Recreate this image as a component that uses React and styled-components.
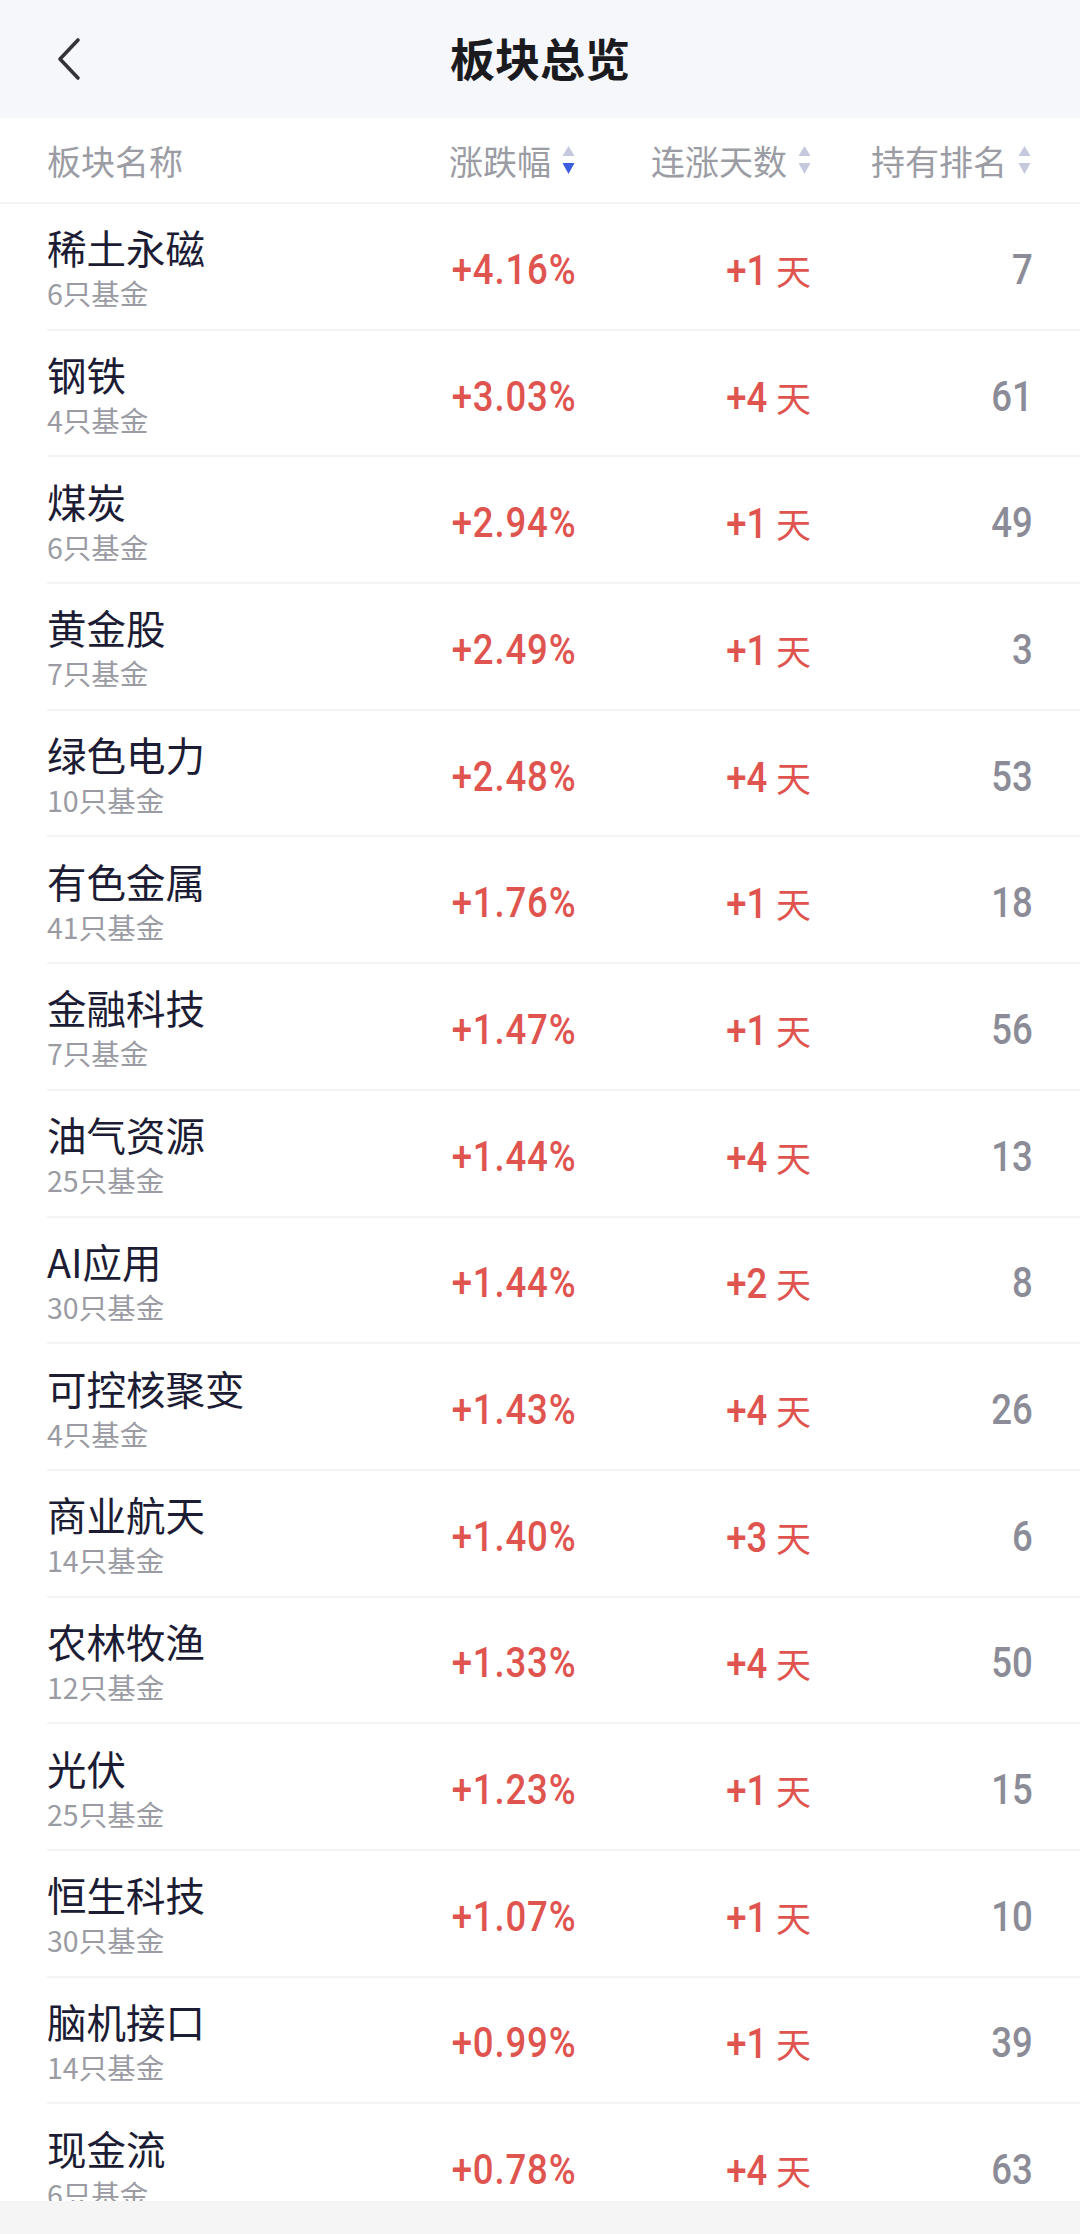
import React from 'react';
import styled, { createGlobalStyle } from 'styled-components';

const GlobalStyle = createGlobalStyle`
  html, body {
    margin: 0;
    padding: 0;
    background: #ffffff;
  }
  body {
    font-family: "Noto Sans CJK SC", "Noto Sans", sans-serif;
  }
`;

const NUM_FONT = `Roboto, "Liberation Sans", sans-serif`;

const Page = styled.div`
  width: 1080px;
  height: 100vh;
  display: flex;
  flex-direction: column;
  overflow: hidden;
  background: #fff;
`;

const TopBar = styled.header`
  height: 118px;
  flex-shrink: 0;
  background: #f6f7fa;
  display: grid;
  grid-template-columns: 118px 1fr 118px;
  align-items: center;
`;

const BackButton = styled.button`
  border: none;
  background: none;
  padding: 0 0 0 56px;
  height: 100%;
  display: flex;
  align-items: center;
  cursor: pointer;
`;

const Title = styled.h1`
  margin: 0 0 4px;
  text-align: center;
  font-size: 45px;
  font-weight: 700;
  color: #1b1b1f;
`;

const HeadRow = styled.div`
  height: 86px;
  flex-shrink: 0;
  box-sizing: border-box;
  padding: 0 47px;
  display: grid;
  grid-template-columns: 1fr 200px 236px 220px;
  align-items: center;
  border-bottom: 2px solid #f2f2f4;
`;

const HeadCell = styled.div`
  display: flex;
  align-items: center;
  justify-content: ${p => (p.$right ? 'flex-end' : 'flex-start')};
  gap: 11px;
  font-size: 34px;
  color: #9b9ca4;
  padding-right: ${p => (p.$right ? '2px' : '0')};
`;

const List = styled.div`
  flex: 1;
  overflow: hidden;
`;

const Row = styled.div`
  height: 126.7px;
  box-sizing: border-box;
  margin-left: 47px;
  padding-right: 47px;
  display: grid;
  grid-template-columns: 1fr 200px 236px 220px;
  align-items: center;
  border-bottom: 2px solid #f4f4f6;
`;

const NameBox = styled.div`
  display: flex;
  flex-direction: column;
`;

const Name = styled.div`
  font-size: 39.5px;
  line-height: 55px;
  color: #1c1d35;
`;

const Sub = styled.div`
  font-size: 28.5px;
  line-height: 40px;
  margin-top: -1px;
  color: #9a9ba3;
`;

const NumCell = styled.div`
  display: flex;
  justify-content: flex-end;
  align-items: baseline;
  gap: 9px;
  padding-top: 6px;
  padding-right: ${p => (p.$pad ? '2px' : '0')};
  color: ${p => (p.$muted ? '#8b8c97' : '#e0544f')};
`;

const Num = styled.span`
  display: inline-block;
  font-family: ${NUM_FONT};
  font-size: 42px;
  font-weight: 500;
  letter-spacing: ${p => (p.$spaced ? '1px' : '0')};
  transform: scaleX(0.87);
  transform-origin: right center;
`;

const DayUnit = styled.span`
  font-size: 35px;
`;

const BottomBar = styled.div`
  position: fixed;
  left: 0;
  right: 0;
  bottom: 0;
  height: 33px;
  background: #f5f5f6;
`;

const BackIcon = () => (
  <svg width="26" height="44" viewBox="0 0 26 44">
    <polyline
      points="22,3 4,22 22,41"
      fill="none"
      stroke="#333338"
      strokeWidth="3.6"
      strokeLinecap="round"
      strokeLinejoin="round"
    />
  </svg>
);

const SortIcon = ({ active }) => (
  <svg width="13" height="32" viewBox="0 0 13 32">
    <polygon points="6.5,2 12.5,12 0.5,12" fill="#c6c8de" />
    <polygon points="0.5,19 12.5,19 6.5,30" fill={active ? '#3c5de0' : '#c6c8de'} />
  </svg>
);

const data = [
  ['稀土永磁', 6, '+4.16%', 1, 7],
  ['钢铁', 4, '+3.03%', 4, 61],
  ['煤炭', 6, '+2.94%', 1, 49],
  ['黄金股', 7, '+2.49%', 1, 3],
  ['绿色电力', 10, '+2.48%', 4, 53],
  ['有色金属', 41, '+1.76%', 1, 18],
  ['金融科技', 7, '+1.47%', 1, 56],
  ['油气资源', 25, '+1.44%', 4, 13],
  ['AI应用', 30, '+1.44%', 2, 8],
  ['可控核聚变', 4, '+1.43%', 4, 26],
  ['商业航天', 14, '+1.40%', 3, 6],
  ['农林牧渔', 12, '+1.33%', 4, 50],
  ['光伏', 25, '+1.23%', 1, 15],
  ['恒生科技', 30, '+1.07%', 1, 10],
  ['脑机接口', 14, '+0.99%', 1, 39],
  ['现金流', 6, '+0.78%', 4, 63],
];

export default function App() {
  return (
    <Page>
      <GlobalStyle />
      <TopBar>
        <BackButton aria-label="返回">
          <BackIcon />
        </BackButton>
        <Title>板块总览</Title>
        <div />
      </TopBar>
      <HeadRow>
        <HeadCell>板块名称</HeadCell>
        <HeadCell $right>
          涨跌幅
          <SortIcon active />
        </HeadCell>
        <HeadCell $right>
          连涨天数
          <SortIcon />
        </HeadCell>
        <HeadCell $right>
          持有排名
          <SortIcon />
        </HeadCell>
      </HeadRow>
      <List>
        {data.map(([name, count, pct, days, rank]) => (
          <Row key={name}>
            <NameBox>
              <Name>{name}</Name>
              <Sub>{count}只基金</Sub>
            </NameBox>
            <NumCell>
              <Num $spaced>{pct}</Num>
            </NumCell>
            <NumCell $pad>
              <Num>+{days}</Num>
              <DayUnit>天</DayUnit>
            </NumCell>
            <NumCell $muted>
              <Num>{rank}</Num>
            </NumCell>
          </Row>
        ))}
      </List>
      <BottomBar />
    </Page>
  );
}
